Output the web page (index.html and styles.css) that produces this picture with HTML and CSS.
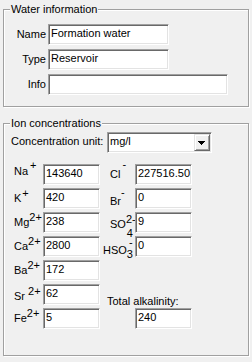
FILE: index.html
```html
<!DOCTYPE html>
<html>
<head>
<meta charset="utf-8">
<link rel="stylesheet" href="styles.css">
</head>
<body>
<fieldset class="group group-water">
  <legend>Water information</legend>
  <div class="info-grid">
    <span class="lbl">Name</span><div class="edit w121">Formation water</div>
    <span class="lbl">Type</span><div class="edit w121">Reservoir</div>
    <span class="lbl">Info</span><div class="edit w180"></div>
  </div>
</fieldset>
<fieldset class="group group-ion">
  <legend>Ion concentrations</legend>
  <div class="unit-row">
    <span class="unit-label">Concentration unit:</span>
    <div class="combo">
      <span class="combo-text">mg/l</span>
      <span class="combo-btn">
        <svg class="arrow" width="7" height="4" viewBox="0 0 7 4"><rect x="0" y="0" width="7" height="1" fill="#000"/><rect x="1" y="1" width="5" height="1" fill="#000"/><rect x="2" y="2" width="3" height="1" fill="#000"/><rect x="3" y="3" width="1" height="1" fill="#000"/></svg>
      </span>
    </div>
  </div>
  <div class="ion-grid">
    <span class="il na">Na<span class="sp plus-na">+</span></span><div class="edit">143640</div>
    <span class="ir cl">Cl<span class="sp minus-cl">-</span></span><div class="edit rf">227516.50</div>

    <span class="il">K<span class="sp plus-k">+</span></span><div class="edit">420</div>
    <span class="ir br">Br<span class="sp minus-br">-</span></span><div class="edit rf">0</div>

    <span class="il">Mg<span class="sp two-plus">2+</span></span><div class="edit">238</div>
    <span class="ir so">SO<span class="sp so-sup">2-</span><span class="sp so-sub">4</span></span><div class="edit rf">9</div>

    <span class="il">Ca<span class="sp two-plus">2+</span></span><div class="edit">2800</div>
    <span class="ir hso">HSO<span class="sp hso-sub">3</span><span class="sp hso-sup">-</span></span><div class="edit rf">0</div>

    <span class="il">Ba<span class="sp two-plus">2+</span></span><div class="edit">172</div>

    <span class="il sr">Sr <span class="sp two-plus">2+</span></span><div class="edit">62</div>
    <span class="ta">Total alkalinity:</span>

    <span class="il">Fe<span class="sp two-plus">2+</span></span><div class="edit">5</div>
    <div class="edit rf">240</div>
  </div>
</fieldset>
</body>
</html>
```
FILE: styles.css
```css
html, body {
  margin: 0;
  padding: 0;
  background: #f0f0f0;
}
body {
  font-family: "Liberation Sans", Arial, sans-serif;
  font-size: 11px;
  color: #000;
  width: 252px;
  height: 362px;
  overflow: hidden;
}
.group {
  box-sizing: border-box;
  margin: 3px 0 0 3px;
  width: 246px;
  min-width: 0;
  border: 1px solid #a0a0a0;
  box-shadow: inset 1px 1px 0 #fff, 1px 1px 0 #fff;
  padding: 8px 0 0 6px;
}
.group legend {
  padding: 0 1px;
  margin: 0;
  line-height: 13px;
  background: #f0f0f0;
}
.group-water {
  height: 104px;
}
.group-ion {
  margin-top: 10px;
  height: 239px;
  padding-top: 2px;
}
.info-grid {
  display: grid;
  grid-template-columns: 36px auto;
  grid-template-rows: repeat(3, 21px);
  column-gap: 2px;
  row-gap: 4px;
  justify-items: start;
}
.lbl {
  justify-self: stretch;
  text-align: right;
  line-height: 20px;
}
.edit {
  box-sizing: border-box;
  height: 21px;
  width: 57px;
  background: #fff;
  border: 1px solid;
  border-color: #a0a0a0 #fff #fff #a0a0a0;
  box-shadow: inset 1px 1px 0 #696969, inset -1px -1px 0 #e3e3e3;
  padding-left: 2px;
  line-height: 17px;
  white-space: nowrap;
  overflow: hidden;
}
.w121 { width: 121px; }
.w180 { width: 180px; }
.unit-row {
  display: grid;
  grid-template-columns: 97px 105px;
  height: 21px;
}
.unit-label {
  padding-left: 1px;
  line-height: 18px;
}
.combo {
  box-sizing: border-box;
  height: 21px;
  background: #fff;
  border: 1px solid;
  border-color: #a0a0a0 #fff #fff #a0a0a0;
  box-shadow: inset 1px 1px 0 #696969, inset -1px -1px 0 #e3e3e3;
  padding: 1px;
  display: flex;
}
.combo-text {
  flex: 1;
  padding-left: 1px;
  line-height: 15px;
}
.combo-btn {
  box-sizing: border-box;
  width: 16px;
  height: 17px;
  background: #f0f0f0;
  border: 1px solid;
  border-color: #e3e3e3 #696969 #696969 #e3e3e3;
  box-shadow: inset 1px 1px 0 #fff, inset -1px -1px 0 #a0a0a0;
  display: flex;
  align-items: center;
  justify-content: center;
}
.arrow {
  display: block;
  margin-left: -1px;
  margin-top: 1px;
}
.ion-grid {
  margin-top: 11px;
  display: grid;
  grid-template-columns: 33px 57px 35px 57px;
  grid-template-rows: repeat(7, 21px);
  row-gap: 3px;
}
.il {
  grid-column: 1;
  padding-left: 4px;
  line-height: 21px;
  white-space: nowrap;
}
.ir {
  grid-column: 3;
  padding-left: 10px;
  line-height: 21px;
  white-space: nowrap;
}
.rf { grid-column: 4; }
.na { line-height: 15px; }
.sr { line-height: 24px; }
.br { line-height: 26px; }
.so { line-height: 24px; }
.hso { padding-left: 3px; line-height: 29px; }
.ta {
  grid-column: 3 / span 2;
  padding-left: 7px;
  line-height: 34px;
  white-space: nowrap;
}
.sp { line-height: 0; }
.plus-na { margin-left: 2px; vertical-align: 6px; }
.plus-k { margin-left: 1px; vertical-align: 5px; }
.two-plus { vertical-align: 5px; }
.minus-cl { margin-left: 2px; vertical-align: 10px; }
.minus-br { vertical-align: 9px; }
.so-sup { vertical-align: 5px; }
.so-sub { vertical-align: -9px; margin-left: -9px; }
.hso-sub { vertical-align: -4px; }
.hso-sup { vertical-align: 8px; margin-left: -4px; }
```
